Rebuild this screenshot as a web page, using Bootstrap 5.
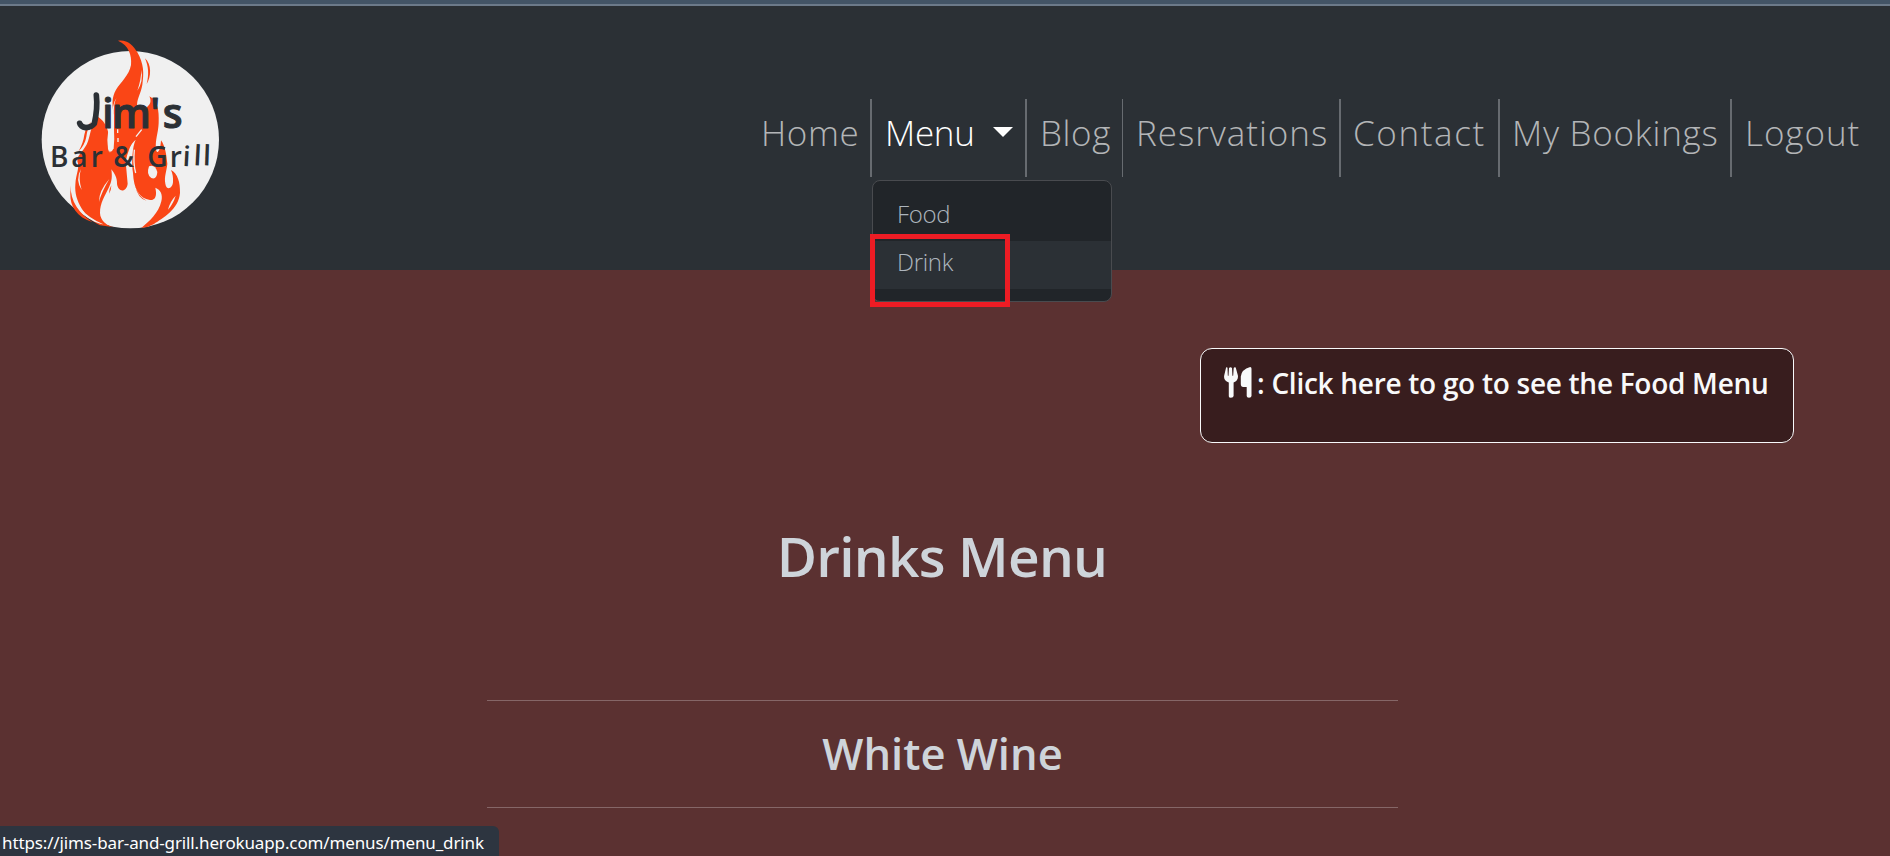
<!DOCTYPE html>
<html lang="en" data-bs-theme="dark">
<head>
<meta charset="utf-8">
<title>Jim's Bar &amp; Grill - Drinks Menu</title>
<meta name="viewport" content="width=device-width, initial-scale=1">
<link href="https://cdn.jsdelivr.net/npm/bootstrap@5.3.0/dist/css/bootstrap.min.css" rel="stylesheet">
<style>
  body { background: #5b3131; font-family: "Open Sans", "Noto Sans", sans-serif; height: 856px; overflow: hidden; }
  .top-strip { height: 6px; background: #435466; border-bottom: 2px solid #6c7a8a; }
  .site-nav { height: 264px; background: #2b3035; }
  .brand-logo { width: 180px; height: 192px; margin: 32px 0 0 40px; display: block; }
  .main-links { margin: 93px 16px 0 0; }
  .main-links .nav-item { height: 78px; border-right: 2px solid #676b70; }
  .main-links .nav-item:last-child { border-right: 0; }
  .main-links .nav-item:nth-child(3) { border-right-width: 1px; }
  .main-links .nav-link { font-weight: 300; font-size: 35px; line-height: 52px; padding: 8px 0 0 13px; color: #b3b5b7; white-space: nowrap; }
  .main-links .nav-link.show { color: #fff; }
  .main-links .dropdown-toggle::after { border-top-width: 10px; border-left-width: 10px; border-right-width: 10px; margin: 0 0 0 18px; vertical-align: 9px; }
  .w-home { width: 124px; letter-spacing: .6px; } .w-menu { width: 155px; letter-spacing: -.3px; }
  .w-blog { width: 96px; letter-spacing: .6px; } .w-resv { width: 218px; letter-spacing: .95px; }
  .w-contact { width: 159px; letter-spacing: 1.6px; } .w-book { width: 232px; letter-spacing: .75px; } .w-out { width: 142px; letter-spacing: .95px; }
  .main-links .w-contact .nav-link, .main-links .w-book .nav-link { padding-left: 12px; }
  .drinks-drop { top: 81px; left: 0; width: 240px; padding: 12px 0; border: 1px solid #494b4f; border-radius: 8px; background: #212529; }
  .drinks-drop .dropdown-item { height: 48px; padding: 3px 24px; font-weight: 300; font-size: 24px; line-height: 36px; color: #adb5bd; }
  .drinks-drop .dropdown-item.hovered { background: #2b3035; }
  .highlight-box { position: absolute; left: -2px; top: 135px; width: 140px; height: 73px; border: 5px solid #ed1c24; z-index: 1100; }
  .food-link { width: 594px; height: 95px; margin: 78px 96px 0 0; padding: 11px 0 0 23px; border: 1px solid #f8f9fa; border-radius: 12px; background: #381d1e; color: #f8f9fa; font-size: 28px; font-weight: 600; line-height: 46px; letter-spacing: -.28px; text-decoration: none; white-space: nowrap; }
  .food-link svg { width: 28px; height: 31px; margin: 7px 5px 0 0; }
  .page-title { font-size: 55px; font-weight: 600; line-height: 66px; letter-spacing: -.8px; margin: 80px 6px 0 0; color: #ced4da; }
  .section-wrap { width: 911px; margin: 111px 0 0 487px; border-top: 1px solid #856667; border-bottom: 1px solid #856667; height: 108px; }
  .section-wrap h2 { font-size: 43.5px; font-weight: 600; line-height: 58px; margin: 24px 0 0; color: #ced4da; }
  .status-url { left: 0; bottom: 0; width: 499px; height: 30px; padding-left: 2px; background: #2d3540; border-top-right-radius: 6px; color: #fff; font-size: 17px; line-height: 33px; letter-spacing: -.13px; white-space: nowrap; font-family: "Noto Sans", sans-serif; }
</style>
</head>
<body>
<div class="top-strip"></div>
<nav class="site-nav d-flex justify-content-between align-items-start">
  <a href="#" class="d-block">
    <svg class="brand-logo" viewBox="120 115 540 576" role="img" aria-label="Jim's Bar and Grill">
      <circle cx="391" cy="420" r="266" fill="#f0f0f0"/>
      <g fill="#fa4616">
        <path d="M354 123C382 119 399 136 412 158C432 194 432 220 427 255C422 285 408 300 412 322L436 326C452 315 455 305 448 290C472 303 478 330 476 370C475 400 465 420 468 450C472 465 481 455 483 422C496 440 499 465 502 492C500 515 492 530 496 552C499 573 517 568 519 548C520 533 518 522 513 511C533 520 541 550 540 580C536 630 488 655 462 673Q446 683 424 685C448 665 476 640 484 605C489 585 482 570 466 564C472 590 465 602 450 601C418 597 401 567 399 520C394 490 397 440 407 420C388 438 378 455 376 475L383 552C380 578 355 580 351 553C352 535 343 520 334 509C337 530 336 545 327 563C314 590 300 610 300 640C301 662 318 677 342 683L300 677C254 654 222 602 226 555C228 520 240 506 232 485C230 465 255 453 264 425C273 397 273 374 294 351C310 363 319 374 325 399C328 424 320 440 327 456C334 464 342 450 342 427C344 397 343 375 343 350C336 320 334 294 348 270C363 247 387 227 393 196C396 166 386 137 354 123Z"/>
        <path d="M342 340L440 325L412 405Q385 440 376 490L345 480L325 450Q342 440 342 400Z"/>
        <path d="M435 176C455 194 454 231 440 253C447 226 446 201 435 176Z"/>
        <path d="M274 366Q262 386 259 411Q255 435 235 456Q250 430 253 405Q258 380 274 366Z"/>
        <path d="M212 557C210 605 238 642 278 668C230 652 210 620 211 583Z"/>
        <path d="M405 555Q414 591 440 603Q413 597 405 555Z"/>
        <path d="M334 557Q334 571 327 582Q327 568 334 557Z"/>
      </g>
      <g fill="#f0f0f0">
        <path d="M424 210Q431 244 412 273Q424 237 424 210Z"/>
        <path d="M349 296Q339 316 342 353Q333 318 349 296Z"/>
        <path d="M243 508Q234 536 245 571Q225 540 243 508Z"/>
        <path d="M328 538Q296 574 297 607Q304 578 328 538Z"/>
        <path d="M527 588Q520 612 504 630Q509 607 527 588Z"/>
        <path d="M325 390Q320 420 324 448Q332 466 341 446Q344 420 342 388Z"/>
        <path d="M447 500Q465 493 472 517Q470 541 454 535Q438 525 447 500Z"/>
        <path d="M323 588C310 618 316 657 336 680L320 674C298 647 308 610 323 588Z"/>
        <path d="M213 563C220 608 252 651 310 674C262 666 219 627 213 563Z"/>
        <path d="M425 390L408 411M403 450Q399 492 407 520" stroke="#f0f0f0" stroke-width="4" fill="none"/>
        <path d="M353 389V400M354 415V427" stroke="#f0f0f0" stroke-width="4"/>
      </g>
      <g fill="#2b3035" stroke="#2b3035" stroke-linejoin="round" stroke-linecap="round" font-family="Open Sans, sans-serif" font-weight="600">
        <path d="M289 286C292 312 288 350 283 372Q275 383 257 384Q242 382 239 371" fill="none" stroke-width="17"/>
        <text font-size="122" y="386" stroke-width="3" x="307 336 451 488">im's</text>
        <text font-size="84" y="502" stroke-width="0" x="150 214 272">Bar</text>
        <text font-size="84" y="502" stroke-width="0" x="340">&amp;</text>
        <text font-size="84" y="502 502 499 497 497" stroke-width="0" x="442 509 547 580 608" rotate="0 0 3 3 2">Grill</text>
      </g>
    </svg>
  </a>
  <ul class="main-links nav flex-nowrap">
    <li class="nav-item w-home"><a class="nav-link" href="#">Home</a></li>
    <li class="nav-item w-menu dropdown"><a class="nav-link dropdown-toggle show" href="#">Menu</a>
      <div class="dropdown-menu drinks-drop show">
        <a class="dropdown-item" href="#">Food</a>
        <a class="dropdown-item hovered" href="#">Drink</a>
      </div>
      <div class="highlight-box"></div>
    </li>
    <li class="nav-item w-blog"><a class="nav-link" href="#">Blog</a></li>
    <li class="nav-item w-resv"><a class="nav-link" href="#">Resrvations</a></li>
    <li class="nav-item w-contact"><a class="nav-link" href="#">Contact</a></li>
    <li class="nav-item w-book"><a class="nav-link" href="#">My Bookings</a></li>
    <li class="nav-item w-out"><a class="nav-link" href="#">Logout</a></li>
  </ul>
</nav>
<main>
  <div class="d-flex justify-content-end">
    <a href="#" class="food-link d-flex align-items-start">
      <svg viewBox="0 0 28 31" fill="currentColor" aria-hidden="true"><path d="M2.1.6Q3.3-.2 3.5 1L3.8 8.5Q4.2 9.4 4.5 8.5L5 1Q6.5-.5 8 1L8.4 8.5Q8.9 9.4 9.2 8.5L9.7 1Q10.6-.4 11.7.6L13.9 8.6Q14.6 13.5 9.6 15.5V29Q9.4 30.8 7 30.8T4.8 29V15.5Q-.7 13.5.2 8.6ZM26.2 0Q27.5 0 27.5 1.7V29Q27.3 30.8 25 30.8T22.7 29V20H19.2Q16.8 19.8 16.8 17V9.5Q17.4 2.5 26.2 0Z"/></svg>
      <span>: Click here to go to see the Food Menu</span>
    </a>
  </div>
  <h1 class="page-title text-center">Drinks Menu</h1>
  <section class="section-wrap text-center"><h2>White Wine</h2></section>
</main>
<div class="status-url position-fixed">https://jims-bar-and-grill.herokuapp.com/menus/menu_drink</div>
<script src="https://cdn.jsdelivr.net/npm/bootstrap@5.3.0/dist/js/bootstrap.bundle.min.js"></script>
</body>
</html>
